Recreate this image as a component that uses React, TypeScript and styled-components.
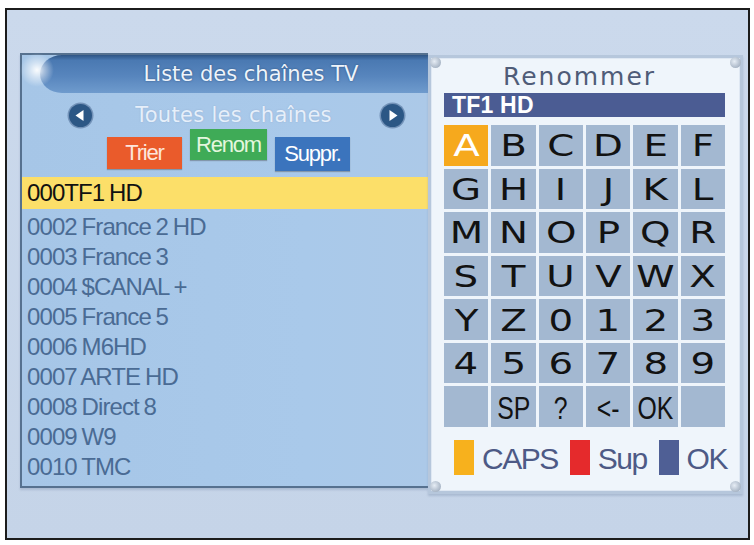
import React from "react";
import styled, { createGlobalStyle } from "styled-components";

const Global = createGlobalStyle`
  html, body { margin: 0; padding: 0; background: #ffffff; }
  body { font-family: "Liberation Sans", Arial, sans-serif; }
`;

const Frame = styled.div`
  margin: 8px 0 0 5px;
  width: 745px;
  height: 532px;
  box-sizing: border-box;
  border: 2px solid #1c1c1c;
  background: linear-gradient(180deg, #cbd9ec 0%, #c5d4e8 100%);
  padding: 43px 0 0 13px;
  display: flex;
  align-items: flex-start;
`;

const LeftPanel = styled.section`
  position: relative;
  width: 408px;
  height: 435px;
  box-sizing: border-box;
  border: 2px solid #56718f;
  border-right: none;
  background: linear-gradient(90deg, #a6c6e7 0%, #a9c9ea 70%, #acc9e8 100%);
  display: flex;
  flex-direction: column;
  box-shadow: 0 2px 2px rgba(120, 140, 170, 0.35);
`;

const Sparkle = styled.div`
  position: absolute;
  left: -2px;
  top: -2px;
  width: 34px;
  height: 34px;
  background: radial-gradient(circle at 50% 50%, rgba(255,255,255,0.95) 0%, rgba(255,255,255,0.5) 30%, rgba(255,255,255,0) 70%);
  pointer-events: none;
`;

const TitleBar = styled.div`
  margin-left: 18px;
  height: 38px;
  border-radius: 22px 0 0 22px / 19px 0 0 19px;
  background: linear-gradient(180deg, #2f5585 0%, #4a79b2 14%, #5785bd 55%, #6f9bcd 100%);
  color: #eef4fb;
  font-family: "DejaVu Sans", sans-serif;
  font-size: 21px;
  line-height: 38px;
  text-align: center;
  padding-left: 34px;
  text-shadow: 0 0 2px rgba(20, 50, 90, 0.6);
`;

const NavRow = styled.div`
  margin-top: 6px;
  height: 32px;
  display: flex;
  align-items: center;
  justify-content: space-between;
  padding: 0 22px 0 45px;
`;

const NavText = styled.span`
  font-family: "DejaVu Sans", sans-serif;
  font-size: 21px;
  color: #e6effa;
  letter-spacing: 0.3px;
  margin-right: 6px;
  text-shadow: 0 0 1px #9bb7d8, 0 0 2px #9bb7d8;
`;

const ButtonRow = styled.div`
  margin-top: -2px;
  height: 42px;
  display: flex;
  align-items: flex-start;
  padding-left: 85px;
  gap: 8px;
`;

const Tag = styled.div<{ $bg: string; $fg: string; $w: number; $h: number; $top: number }>`
  width: ${(p) => p.$w}px;
  height: ${(p) => p.$h}px;
  margin-top: ${(p) => p.$top}px;
  background: ${(p) => p.$bg};
  color: ${(p) => p.$fg};
  font-family: "Liberation Sans", Arial, sans-serif;
  font-size: 22px;
  letter-spacing: -1.2px;
  display: flex;
  align-items: center;
  justify-content: center;
  box-shadow: 0 1px 1px rgba(60, 60, 60, 0.35);
`;

const List = styled.div`
  margin-top: 6px;
  display: flex;
  flex-direction: column;
`;

const Row = styled.div<{ $selected?: boolean }>`
  height: ${(p) => (p.$selected ? 32 : 30)}px;
  margin-bottom: ${(p) => (p.$selected ? 3 : 0)}px;
  padding-left: 5px;
  display: flex;
  align-items: center;
  background: ${(p) => (p.$selected ? "#fcdf69" : "transparent")};
  color: ${(p) => (p.$selected ? "#111111" : "#4a6b94")};
  font-family: "Liberation Sans", Arial, sans-serif;
  font-size: 24px;
  letter-spacing: -0.9px;
  word-spacing: -1px;
`;

const RightPanel = styled.section`
  position: relative;
  margin-top: 2px;
  width: 315px;
  height: 439px;
  box-sizing: border-box;
  border: 3px solid #b6c7dc;
  box-shadow: inset 0 0 0 1px #dfe8f3, 0 2px 2px rgba(120, 140, 170, 0.35);
  background: #eff5fb;
  padding: 0 15px 0 13px;
  display: flex;
  flex-direction: column;
`;

const Knob = styled.span<{ $x: "left" | "right"; $y: "top" | "bottom" }>`
  position: absolute;
  ${(p) => p.$x}: -1px;
  ${(p) => p.$y}: -1px;
  width: 11px;
  height: 11px;
  border-radius: 50%;
  background: radial-gradient(circle at 40% 40%, #e6edf5 0%, #a9b6c6 70%);
`;

const DialogTitle = styled.div`
  height: 35px;
  line-height: 38px;
  text-align: center;
  font-family: "DejaVu Sans", sans-serif;
  font-size: 25px;
  letter-spacing: 2px;
  color: #4f5c78;
  padding-right: 10px;
`;

const NameBar = styled.div`
  height: 24px;
  background: #4b5c93;
  color: #ffffff;
  font-family: "Liberation Sans", Arial, sans-serif;
  font-weight: 700;
  font-size: 23px;
  line-height: 25px;
  padding-left: 8px;
  letter-spacing: 0.2px;
`;

const KeyGrid = styled.div`
  margin-top: 8px;
  height: 302px;
  display: grid;
  grid-template-columns: repeat(6, 1fr);
  grid-template-rows: repeat(7, 1fr);
  gap: 3px;
`;

const Key = styled.div<{ $active?: boolean }>`
  background: ${(p) => (p.$active ? "#f6a91d" : "#a3b8d1")};
  color: ${(p) => (p.$active ? "#ffffff" : "#121212")};
  display: flex;
  align-items: center;
  justify-content: center;
  overflow: hidden;
`;

const Glyph = styled.span<{ $small?: boolean }>`
  display: inline-block;
  font-family: ${(p) => (p.$small ? '"Liberation Sans", Arial' : '"DejaVu Sans"')}, sans-serif;
  font-size: 31px;
  line-height: 1;
  transform: scaleX(${(p) => (p.$small ? 0.8 : 1.25)});
  margin-top: ${(p) => (p.$small ? 3 : 1)}px;
`;

const Legend = styled.div`
  margin-top: 13px;
  height: 35px;
  display: flex;
  padding-left: 10px;
  gap: 12px;
`;

const LegendItem = styled.div`
  display: flex;
  align-items: stretch;
  gap: 8px;
`;

const Swatch = styled.span<{ $c: string }>`
  width: 20px;
  background: ${(p) => p.$c};
`;

const LegendText = styled.span`
  font-family: "Liberation Sans", Arial, sans-serif;
  font-size: 30px;
  line-height: 37px;
  letter-spacing: -1.5px;
  color: #4d5a86;
`;

const Arrow = ({ dir }: { dir: "left" | "right" }) => (
  <svg width="27" height="27" viewBox="0 0 27 27">
    <circle cx="13.5" cy="13.5" r="13" fill="#7392b8" />
    <circle cx="13.5" cy="13.5" r="11.5" fill="#2c5785" />
    {dir === "left" ? (
      <path d="M8.5 13.5 L16.5 8 L16.5 19 Z" fill="#ffffff" />
    ) : (
      <path d="M18.5 13.5 L10.5 8 L10.5 19 Z" fill="#ffffff" />
    )}
  </svg>
);

const channels = [
  "0002 France 2 HD",
  "0003 France 3",
  "0004 $CANAL +",
  "0005 France 5",
  "0006 M6HD",
  "0007 ARTE HD",
  "0008 Direct 8",
  "0009 W9",
  "0010 TMC",
];

const keys: string[][] = [
  ["A", "B", "C", "D", "E", "F"],
  ["G", "H", "I", "J", "K", "L"],
  ["M", "N", "O", "P", "Q", "R"],
  ["S", "T", "U", "V", "W", "X"],
  ["Y", "Z", "0", "1", "2", "3"],
  ["4", "5", "6", "7", "8", "9"],
  ["", "SP", "?", "<-", "OK", ""],
];

export default function App() {
  return (
    <>
      <Global />
      <Frame>
        <LeftPanel>
          <Sparkle />
          <TitleBar>Liste des chaînes TV</TitleBar>
          <NavRow>
            <Arrow dir="left" />
            <NavText>Toutes les chaînes</NavText>
            <Arrow dir="right" />
          </NavRow>
          <ButtonRow>
            <Tag $bg="#ea5b2b" $fg="#fde6dc" $w={75} $h={32} $top={8}>Trier</Tag>
            <Tag $bg="#3fab57" $fg="#e4f7de" $w={77} $h={31} $top={0}>Renom</Tag>
            <Tag $bg="#3b74bd" $fg="#ffffff" $w={75} $h={34} $top={8}>Suppr.</Tag>
          </ButtonRow>
          <List>
            <Row $selected>000TF1 HD</Row>
            {channels.map((c) => (
              <Row key={c}>{c}</Row>
            ))}
          </List>
        </LeftPanel>
        <RightPanel>
          <Knob $x="left" $y="top" />
          <Knob $x="right" $y="top" />
          <Knob $x="left" $y="bottom" />
          <Knob $x="right" $y="bottom" />
          <DialogTitle>Renommer</DialogTitle>
          <NameBar>TF1 HD</NameBar>
          <KeyGrid>
            {keys.flat().map((k, i) => (
              <Key key={i} $active={i === 0}>
                {k && <Glyph $small={i >= 36}>{k}</Glyph>}
              </Key>
            ))}
          </KeyGrid>
          <Legend>
            <LegendItem>
              <Swatch $c="#f7b11d" />
              <LegendText>CAPS</LegendText>
            </LegendItem>
            <LegendItem>
              <Swatch $c="#e52a2c" />
              <LegendText>Sup</LegendText>
            </LegendItem>
            <LegendItem>
              <Swatch $c="#4f5f95" />
              <LegendText>OK</LegendText>
            </LegendItem>
          </Legend>
        </RightPanel>
      </Frame>
    </>
  );
}
